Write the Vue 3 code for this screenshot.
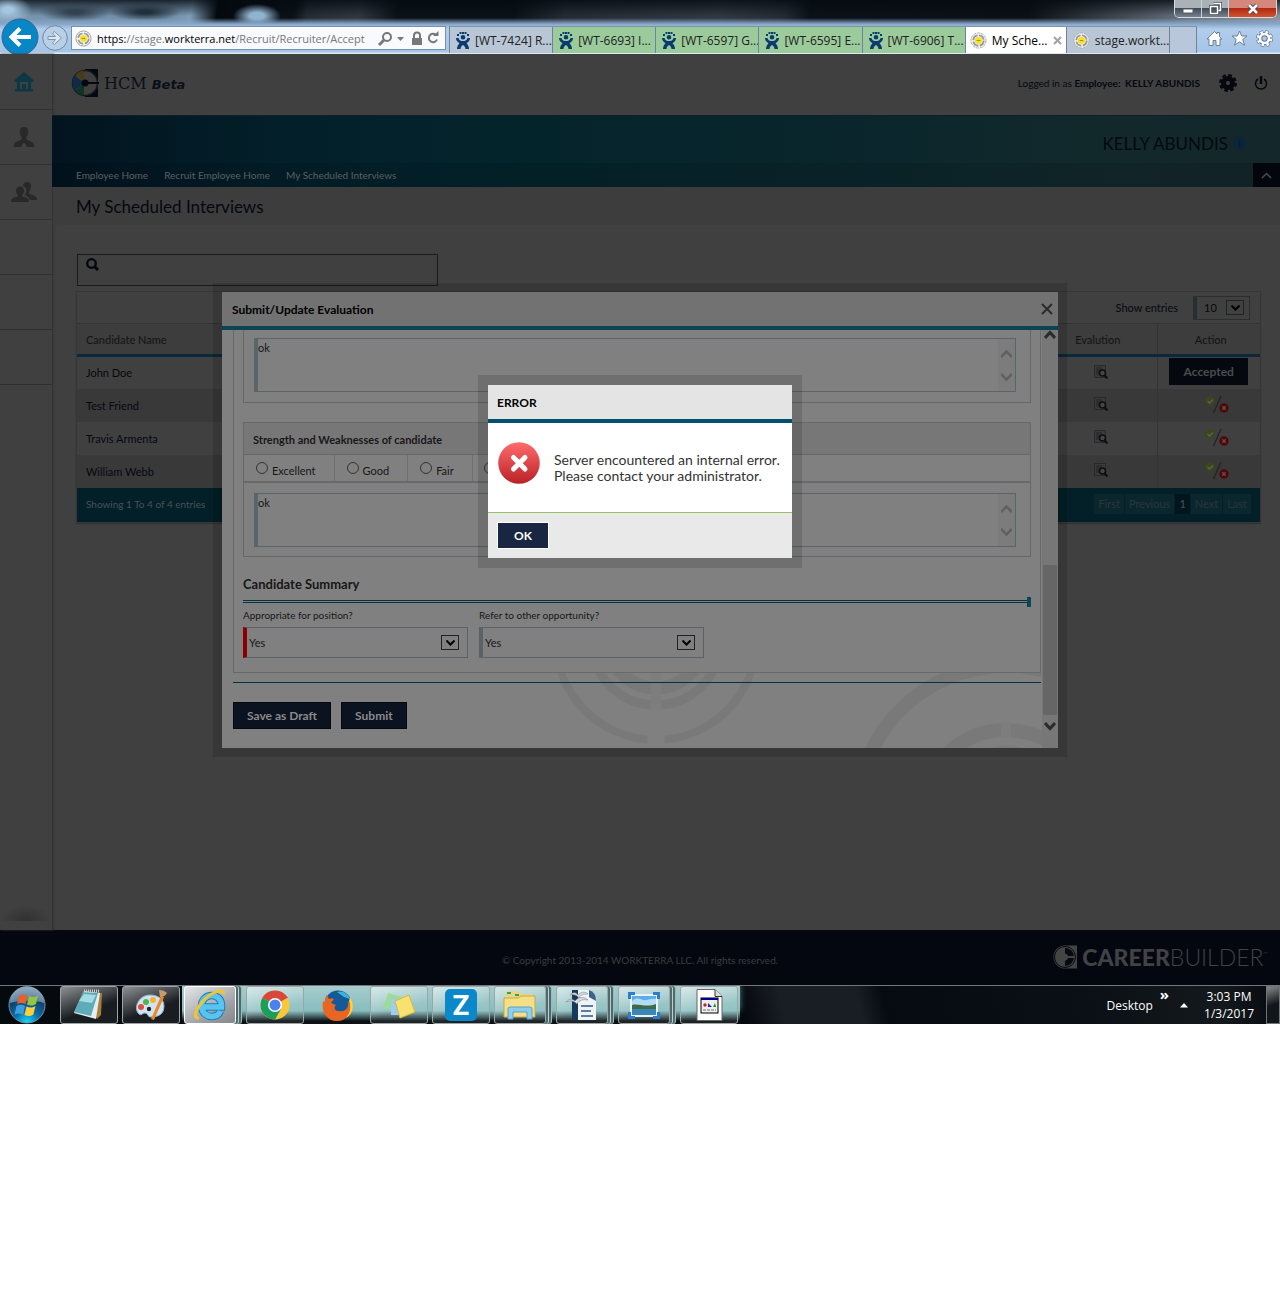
<script setup>
import { ref } from 'vue'

const tabs = [
  { title: '[WT-7424] R...', icon: 'person', kind: 'plain' },
  { title: '[WT-6693] I...', icon: 'person', kind: 'green' },
  { title: '[WT-6597] G...', icon: 'person', kind: 'green' },
  { title: '[WT-6595] E...', icon: 'person', kind: 'green' },
  { title: '[WT-6906] T...', icon: 'person', kind: 'green' },
  { title: 'My Sche...', icon: 'target', kind: 'active' },
  { title: 'stage.workt...', icon: 'target', kind: 'plain' }
]
const crumbs = ['Employee Home', 'Recruit Employee Home', 'My Scheduled Interviews']
const candidates = [
  { name: 'John Doe', accepted: true },
  { name: 'Test Friend', accepted: false },
  { name: 'Travis Armenta', accepted: false },
  { name: 'William Webb', accepted: false }
]
const pages = ['First', 'Previous', '1', 'Next', 'Last']
const ratings = ['Excellent', 'Good', 'Fair']
const apps = [
  { id: 'notepad' },
  { id: 'paint' },
  { id: 'ie', stack: true, current: true },
  { id: 'chrome', teal: true },
  { id: 'firefox', teal: true, bare: true },
  { id: 'notes', teal: true },
  { id: 'z', teal: true },
  { id: 'explorer', teal: true, stack: true },
  { id: 'writer', teal: true, stack: true },
  { id: 'viewer', teal: true, stack: true },
  { id: 'file', teal: true }
]
const search = ref('')
const firstNote = ref('ok')
const secondNote = ref('ok')
const rating = ref('')
</script>

<template>
  <div class="screen">
    <header class="browser">
      <div class="titlebar">
        <div class="window-buttons">
          <button class="win" aria-label="Minimize"><svg width="12" height="12" viewBox="0 0 12 12"><rect x="1" y="6" width="10" height="4" fill="#fff" stroke="#555b66" /></svg></button>
          <button class="win" aria-label="Restore"><svg width="13" height="13" viewBox="0 0 13 13"><path d="M4.500 1.500h7v7h-2M1.500 4.500h7v7h-7z" fill="none" stroke="#454b58" stroke-width="3" /><path d="M4.500 1.500h7v7h-2M1.500 4.500h7v7h-7z" fill="none" stroke="#fff" stroke-width="1.500" /></svg></button>
          <button class="win close" aria-label="Close window"><svg width="12" height="12" viewBox="0 0 12 12"><path d="M2 2l8 8M10 2l-8 8" stroke="#4b4352" stroke-width="4.500" /><path d="M2 2l8 8M10 2l-8 8" stroke="#fff" stroke-width="2.500" /></svg></button>
        </div>
      </div>
      <div class="toolbar">
        <button class="nav-back" aria-label="Back"><svg width="38" height="36" viewBox="0 0 38 36"><circle cx="19" cy="19" r="18" fill="#0986c6" stroke="#35638c" /><path d="M30 19H12M19 10.500L10.500 19l8.500 8.500" fill="none" stroke="#fff" stroke-width="4" /></svg></button>
        <button class="nav-forward" aria-label="Forward"><svg width="26" height="26" viewBox="0 0 26 26"><circle cx="13" cy="13" r="12.300" fill="#b9cfe6" stroke="#6f87a5" /><path d="M6 11.500h7.500L10.500 8l1.800-1.500L19.500 13l-7.200 6.500-1.800-1.500 3-3.500H6z" fill="#dce8f4" stroke="#7d93ae" /></svg></button>
        <div class="address">
          <svg width="17" height="17" viewBox="0 0 18 18"><circle cx="9" cy="9" r="8" fill="#fff" stroke="#999" /><circle cx="9" cy="9" r="5.500" fill="none" stroke="#9a9a9a" stroke-width="2" stroke-dasharray="7 1.600" /><circle cx="9" cy="9" r="3.800" fill="#f3e12b" /><path d="M7 9h4" stroke="#a58d10" /></svg>
          <span class="url">https:<i>//stage.</i>workterra.net<i>/Recruit/Recruiter/Accept</i></span>
          <svg width="63" height="17" viewBox="0 0 63 17" fill="none" stroke="#777" stroke-width="2"><circle cx="9" cy="7" r="4" /><path d="M6 10l-5 5" stroke-width="3" /><path d="M19 7h7l-3.500 4z" fill="#777" stroke="none" /><path d="M34 8h10v7H34z" fill="#777" stroke="none" /><path d="M36 8V5.500a3 3 0 0 1 6 0V8" /><path d="M58 5a4.200 4.200 0 1 0 1 4.500" /><path d="M55 6h5.500V1z" fill="#777" stroke="none" /></svg>
        </div>
        <nav class="tabs" aria-label="Browser tabs">
          <a v-for="t in tabs" :key="t.title" href="#" class="tab" :class="t.kind">
            <svg v-if="t.icon === 'person'" width="14" height="17" viewBox="0 0 14 17" fill="#0a3a6e"><path d="M1 2h2v2H1zM3.500 0h2v2h-2zM8.500 0h2v2h-2zM11 2h2v2h-2zM6 0h2v2H6z" /><path d="M7 3a2.300 2.300 0 1 1 0 4.600A2.300 2.300 0 0 1 7 3z" /><path d="M0 6h2.500C3 8.500 5 9 7 9s4-.5 4.500-3H14c0 2.500-1.500 4-3.500 5 1 1.500 2.500 3 2.500 6H9.500C9.500 15 8.500 14 7 13c-1.500 1-2.500 2-2.500 4H1c0-3 1.500-4.500 2.500-6C1.500 10 0 8.500 0 6z" /></svg>
            <svg v-else width="17" height="17" viewBox="0 0 18 18"><circle cx="9" cy="9" r="8" fill="#f3f3f3" stroke="#aaa" stroke-dasharray="3 1" /><circle cx="9" cy="9" r="5.500" fill="none" stroke="#999" stroke-width="2" stroke-dasharray="7 1.600" /><circle cx="9" cy="9" r="3.800" fill="#f6e320" /><path d="M7 9h4" stroke="#a58d10" /></svg>
            <span>{{ t.title }}</span>
            <svg v-if="t.kind === 'active'" class="tab-close" width="9" height="9" viewBox="0 0 9 9"><path d="M1 1l7 7M8 1L1 8" stroke="#a5a5a5" stroke-width="2.200" /></svg>
          </a>
          <button class="new-tab" aria-label="New tab"></button>
        </nav>
        <div class="tools">
          <button aria-label="Home"><svg width="17" height="17" viewBox="0 0 17 17"><path d="M8.500 1.500l2.500 2.500V2.500h2.500v4l2.500 2.500h-2v6.500h-4v-5h-3v5H3V9H1z" fill="#fff" stroke="#6a7f9c" /></svg></button>
          <button aria-label="Favorites"><svg width="17" height="17" viewBox="0 0 17 17"><path d="M8.500 1l2.200 5h5.300l-4.200 3.500 1.700 5.800-5-3.400-5 3.400 1.700-5.800L1 6h5.300z" fill="#fff" stroke="#6a7f9c" /></svg></button>
          <button aria-label="Tools"><svg width="17" height="17" viewBox="0 0 17 17"><circle cx="8.500" cy="8.500" r="6.500" fill="none" stroke="#5f7594" stroke-width="4" stroke-dasharray="3 2.100" /><circle cx="8.500" cy="8.500" r="4.500" fill="none" stroke="#5f7594" stroke-width="4.500" /><circle cx="8.500" cy="8.500" r="6.500" fill="none" stroke="#fff" stroke-width="2.600" stroke-dasharray="2.400 2.700" stroke-dashoffset="-.3" /><circle cx="8.500" cy="8.500" r="4.500" fill="none" stroke="#fff" stroke-width="2.600" /></svg></button>
        </div>
      </div>
    </header>

    <main class="page">
      <div class="workspace">
        <aside class="sidebar">
          <a href="#" aria-label="Home"><svg width="20" height="20" viewBox="0 0 20 20"><path d="M10 0l9.500 8v2H17v7h2v2.500H1V17h2v-7H.5V8zM6 10v7h2v-5h4v5h2v-7z" fill="#0c3744" fill-rule="evenodd" /></svg></a>
          <a href="#" aria-label="Profile"><svg width="20" height="20" viewBox="0 0 20 20" fill="#282828"><path d="M10 0c3 0 4.500 2 4.300 5-.2 2.500-1 4-2 5l.2 2.500 5.500 2.500c1.500.8 2 2 2 5h-7L10.800 16h-1.600L7 20H0c0-3 .5-4.200 2-5l5.500-2.500.2-2.500c-1-1-1.800-2.500-2-5C5.500 2 7 0 10 0z" /></svg></a>
          <a href="#" aria-label="People"><svg width="26" height="20" viewBox="0 0 26 20" fill="#282828"><path d="M16 0c3 0 4 2 4 4.500 0 2-.7 3.700-2 5l.2 2 5.500 2.500c1.600.8 2.300 2 2.300 4h-7c-.5-2.500-2-3.500-5.500-5 1.500-1.500 2.500-4 1.500-6.500-.5-1-1.500-2-3-2.500.3-2.500 1.500-4 4-4z" /><path d="M9 4.500c2.800 0 4 1.700 4 4 0 2-.8 3.500-1.800 4.500v1.500L16 16c1.500.7 2 2 2 4H0c0-2 .5-3.300 2-4l4.800-1.500V13C5.800 12 5 10.500 5 8.500c0-2.300 1.200-4 4-4z" /></svg></a>
          <a href="#" aria-label="Menu item 4"></a>
          <a href="#" aria-label="Menu item 5"></a>
          <a href="#" aria-label="Menu item 6"></a>
          <div class="sidebar-shade"></div>
        </aside>

        <div class="content">
          <header class="app-header">
            <svg width="28" height="28" viewBox="0 0 28 28"><path d="M14 0h13v28H14z" fill="#05080f" /><circle cx="14" cy="14" r="12.500" fill="#404040" stroke="#141a22" stroke-width="1.500" /><path d="M14 14L5 5a12 12 0 0 1 7-3.500z" fill="#4c3a10" /><path d="M13 14L4 6.500a12 12 0 0 0 0 15z" fill="#102c45" /><path d="M13 14l-8.500 8a12 12 0 0 0 8.500 4z" fill="#0b3524" /><path d="M18 7a8.500 8.500 0 0 1 4 6h-8zM18 21a8.500 8.500 0 0 0 4-6h-8z" fill="#404040" /><path d="M14 13h14v2H14z" fill="#05080f" /><circle cx="14" cy="14" r="3.500" fill="#05080f" /></svg>
            <h1 class="brand">HCM <em>Beta</em></h1>
            <p class="login">Logged in as <b>Employee:</b> <strong>KELLY ABUNDIS</strong></p>
            <button aria-label="Settings"><svg width="18" height="18" viewBox="0 0 18 18"><circle cx="9" cy="9" r="4.500" fill="none" stroke="#05080f" stroke-width="5" /><circle cx="9" cy="9" r="7" fill="none" stroke="#05080f" stroke-width="4" stroke-dasharray="3.300 2.200" /></svg></button>
            <button aria-label="Log out"><svg width="14" height="16" viewBox="0 0 14 16" fill="none" stroke="#05080f"><path d="M4 4a5.500 5.500 0 1 0 6 0" stroke-width="1.500" /><path d="M7 1v8" stroke-width="2.500" /></svg></button>
          </header>

          <section class="banner">
            <div class="who">KELLY ABUNDIS <svg width="13" height="13" viewBox="0 0 13 13"><circle cx="6.500" cy="6.500" r="6.500" fill="#0b263b" /><path d="M6.500 3v1.500M6.500 5.500v5" stroke="#0a1e2c" stroke-width="2" /></svg></div>
            <nav class="crumbs">
              <a v-for="c in crumbs" :key="c" href="#">{{ c }}</a>
              <button aria-label="Collapse"><svg width="11" height="7" viewBox="0 0 11 7"><path d="M1 6l4.500-4.500L10 6" fill="none" stroke="#4b4b50" stroke-width="1.500" /></svg></button>
            </nav>
          </section>

          <h2 class="page-title">My Scheduled Interviews</h2>

          <div class="listing">
            <label class="search">
              <svg width="13" height="13" viewBox="0 0 13 13" fill="none" stroke="#04060d"><circle cx="5.500" cy="5.500" r="4.300" stroke-width="2.300" /><path d="M8.500 8.500l3.500 3.500" stroke-width="3" /></svg>
              <input v-model="search" type="text" aria-label="Search" />
            </label>
            <div class="card">
              <div class="card-tools">
                <label for="entries">Show entries</label>
                <div class="picker small">
                  <select id="entries"><option>10</option></select>
                  <span class="drop"><svg width="9" height="6" viewBox="0 0 9 6"><path d="M0.500 .5l4 4 4-4" fill="none" stroke="#000" stroke-width="2" /></svg></span>
                </div>
              </div>
              <table>
                <colgroup><col class="c-name" /><col /><col class="c-eval" /><col class="c-action" /></colgroup>
                <thead>
                  <tr><th>Candidate Name</th><th></th><th class="mid">Evalution</th><th class="mid act">Action</th></tr>
                </thead>
                <tbody>
                  <tr v-for="c in candidates" :key="c.name">
                    <td>{{ c.name }}</td>
                    <td></td>
                    <td class="mid eval"><svg width="14" height="14" viewBox="0 0 14 14"><path d="M.5.500h11v12H.5z" fill="#3a3a3a" stroke="#292929" /><path d="M2 3h6M2 5h6M2 7h4M2 9h4" stroke="#222" /><circle cx="8.500" cy="8" r="3" fill="#454545" stroke="#0c0e14" stroke-width="1.500" /><path d="M10.500 10.500l3 3" stroke="#0c0e14" stroke-width="2" /></svg></td>
                    <td class="mid act" :class="{ done: c.accepted }">
                      <button v-if="c.accepted" class="accepted">Accepted</button>
                      <svg v-else width="24" height="19" viewBox="0 0 24 19"><circle cx="5" cy="6" r="4.700" fill="#3a4819" /><path d="M2.500 6l2 2 3.500-3.500" fill="none" stroke="#5a5f4f" stroke-width="1.500" /><path d="M16 1L8.500 18" stroke="#222" stroke-width="1.200" /><circle cx="19" cy="13" r="4.700" fill="#4d0909" /><path d="M17.300 11.300l3.400 3.400M20.700 11.300l-3.400 3.400" stroke="#6a4a4a" stroke-width="1.300" /></svg>
                    </td>
                  </tr>
                </tbody>
              </table>
              <div class="card-foot">
                <span>Showing 1 To 4 of 4 entries</span>
                <nav class="pager"><a v-for="p in pages" :key="p" href="#" :class="{ on: p === '1' }">{{ p }}</a></nav>
              </div>
            </div>
          </div>
        </div>
      </div>

      <footer class="app-footer">
        <span></span>
        <p>© Copyright 2013-2014 WORKTERRA LLC. All rights reserved.</p>
        <div class="career">
          <svg width="24" height="24" viewBox="0 0 24 24"><path d="M12 .5h12v23H12A11.500 11.500 0 0 1 12 .5z" fill="#444" /><circle cx="12" cy="12" r="10.500" fill="none" stroke="#060911" /><path d="M12 3a9 9 0 0 1 9 8h-6a3 3 0 0 0-3-2.500zM12 21a9 9 0 0 0 9-8h-6a3 3 0 0 1-3 2.500z" fill="#060911" /></svg>
          <span><b>CAREER</b>BUILDER<sup>™</sup></span>
        </div>
      </footer>

      <div class="overlay evaluation-layer">
        <section class="modal evaluation" role="dialog" aria-labelledby="eval-title">
          <header class="modal-head">
            <h2 id="eval-title">Submit/Update Evaluation</h2>
            <button aria-label="Close"><svg width="12" height="12" viewBox="0 0 12 12"><path d="M1 1l10 10M11 1L1 11" stroke="#2c2c2c" stroke-width="2" /></svg></button>
          </header>
          <div class="modal-body">
            <form class="form" @submit.prevent>
              <div class="panel">
                <div class="question first">
                  <div class="note">
                    <textarea v-model="firstNote" aria-label="Comments"></textarea>
                    <span class="note-scroll"><svg width="11" height="8" viewBox="0 0 11 8"><path d="M0 7l5.500-5.500L11 7" fill="none" stroke="#606060" stroke-width="2.500" /></svg><svg width="11" height="8" viewBox="0 0 11 8"><path d="M0 1l5.500 5.500L11 1" fill="none" stroke="#606060" stroke-width="2.500" /></svg></span>
                  </div>
                </div>
                <div class="question">
                  <h3>Strength and Weaknesses of candidate</h3>
                  <div class="ratings">
                    <label v-for="r in ratings" :key="r"><input v-model="rating" type="radio" name="rating" :value="r" /><span>{{ r }}</span></label>
                    <label><input v-model="rating" type="radio" name="rating" value="other" aria-label="Other rating" /></label>
                  </div>
                  <div class="note">
                    <textarea v-model="secondNote" aria-label="Strength and weaknesses comments"></textarea>
                    <span class="note-scroll"><svg width="11" height="8" viewBox="0 0 11 8"><path d="M0 7l5.500-5.500L11 7" fill="none" stroke="#606060" stroke-width="2.500" /></svg><svg width="11" height="8" viewBox="0 0 11 8"><path d="M0 1l5.500 5.500L11 1" fill="none" stroke="#606060" stroke-width="2.500" /></svg></span>
                  </div>
                </div>
                <h3 class="summary">Candidate Summary</h3>
                <div class="rule"></div>
                <div class="fields">
                  <div class="field">
                    <label for="fit">Appropriate for position?</label>
                    <div class="picker required"><select id="fit"><option>Yes</option></select><span class="drop"><svg width="9" height="6" viewBox="0 0 9 6"><path d="M0.500 .5l4 4 4-4" fill="none" stroke="#000" stroke-width="2" /></svg></span></div>
                  </div>
                  <div class="field">
                    <label for="refer">Refer to other opportunity?</label>
                    <div class="picker"><select id="refer"><option>Yes</option></select><span class="drop"><svg width="9" height="6" viewBox="0 0 9 6"><path d="M0.500 .5l4 4 4-4" fill="none" stroke="#000" stroke-width="2" /></svg></span></div>
                  </div>
                </div>
              </div>
              <div class="form-foot">
                <svg class="rings" width="500" height="75" viewBox="0 0 500 75" fill="none" stroke="#797979"><circle cx="114" cy="-33" r="100" stroke-width="8" /><circle cx="114" cy="-33" r="65" stroke-width="9" /><circle cx="114" cy="-33" r="48" stroke-width="13" /><g stroke-width="14"><circle cx="464" cy="142" r="149" /><circle cx="464" cy="142" r="85" /><circle cx="464" cy="142" r="62" /></g><path d="M114 60v13" stroke="#808080" stroke-width="17" /><path d="M464 0v8" stroke="#808080" stroke-width="28" /><path d="M114 0v37M464 49v16" stroke="#7d7d7d" stroke-width="10" /></svg>
                <div class="buttons">
                  <button type="button">Save as Draft</button>
                  <button type="submit">Submit</button>
                </div>
              </div>
            </form>
            <div class="scrollbar">
              <svg width="12" height="9" viewBox="0 0 12 9"><path d="M1 8l5-5.500L11 8" fill="none" stroke="#2b2b2b" stroke-width="3" /></svg>
              <span class="thumb"></span>
              <svg width="12" height="9" viewBox="0 0 12 9"><path d="M1 1l5 5.500L11 1" fill="none" stroke="#2b2b2b" stroke-width="3" /></svg>
            </div>
          </div>
        </section>
      </div>

      <div class="overlay error-layer">
        <section class="modal error" role="alertdialog" aria-labelledby="err-title">
          <header><h2 id="err-title">ERROR</h2></header>
          <div class="error-body">
            <svg width="42" height="42" viewBox="0 0 42 42"><defs><linearGradient id="red" x1="0" y1="0" x2="0" y2="1"><stop offset="0" stop-color="#ff6c6c" /><stop offset="1" stop-color="#b92126" /></linearGradient></defs><circle cx="21" cy="21" r="20.800" fill="url(#red)" /><path d="M15.500 15.500l11.500 11.500M27 15.500L15.500 27" stroke="#fff" stroke-width="5" stroke-linecap="round" /></svg>
            <p>Server encountered an internal error.<br />Please contact your administrator.</p>
          </div>
          <footer><button>OK</button></footer>
        </section>
      </div>
    </main>

    <footer class="taskbar">
      <button class="start" aria-label="Start"><svg width="38" height="38" viewBox="0 0 38 38"><defs><radialGradient id="orb" cx=".5" cy="1" r="1"><stop offset="0" stop-color="#13e0ff" /><stop offset=".35" stop-color="#0b6eaa" /><stop offset=".7" stop-color="#123f6c" /><stop offset="1" stop-color="#7f98ae" /></radialGradient></defs><circle cx="19" cy="19" r="18" fill="url(#orb)" stroke="#7493a8" /><path d="M2 17a17 17 0 0 1 34 0c-8-3-24-3-34 0z" fill="#a6bdcf" opacity=".55" /><path d="M11 10c3-2 5-2 8.500-.5L17.500 18c-3-1.500-5.500-1.500-8.500 0z" fill="#e6602b" /><path d="M21 10c3 1.500 5.500 1.500 9-.5l-2 8.500c-3.500 2-6 2-9 .5z" fill="#93c83e" /><path d="M8.500 20c3-1.700 5.500-1.500 8.500 0l-2 8.500c-3-1.500-5.500-1.500-8.500 0z" fill="#3f9be0" /><path d="M18.500 20.500c3 1.500 5.500 1.500 9-.5l-2.200 8.500c-3.300 2-6 2-8.800.5z" fill="#fbcf38" /></svg></button>
      <div class="apps">
        <div v-for="a in apps" :key="a.id" class="slot" :class="{ teal: a.teal, last: a.id === 'file' }">
          <button class="app" :class="{ stacked: a.stack, current: a.current, bare: a.bare }" :aria-label="a.id">
            <svg v-if="a.id === 'notepad'" width="34" height="32" viewBox="0 0 34 32"><path d="M13 3l17 1-1 22-4 4z" fill="#a57f35" /><path d="M12 2l16 2-4 26-22-6z" fill="#e4eef0" /><path d="M11 3l15 1-7 23L2 23z" fill="#5eabb9" /><path d="M12 5l12 1-4 8-13-2z" fill="#a5dbe2" /><path d="M12 2h15" stroke="#ccc" stroke-width="3" stroke-dasharray="1 1" /></svg>
            <svg v-else-if="a.id === 'paint'" width="34" height="32" viewBox="0 0 34 32"><path d="M16 6c9 0 14 5 14 11 0 8-5 11-14 11-2 0-2-4-5-4s-3 3-6 1C-1 20 4 6 16 6z" fill="#cfe3f0" stroke="#8fb2cc" /><circle cx="7" cy="18" r="3" fill="#e04b3d" /><circle cx="12" cy="13" r="3" fill="#51b253" /><circle cx="19" cy="11" r="3" fill="#f5b233" /><circle cx="15" cy="20" r="2.200" fill="#222" /><path d="M27 7l3 1-10 23-3-1z" fill="#e8892f" /><path d="M25 1c3 0 6 1 8 3-2 3-4 4-7 4z" fill="#c99b6a" /></svg>
            <svg v-else-if="a.id === 'ie'" width="34" height="32" viewBox="0 0 34 32"><g fill="none"><path d="M9 18h19.500C29 10 24 6.500 18.500 6.500S8.500 11 8.500 17s4.500 10.500 10 10.500c4 0 7.500-2 9-5.500" stroke="#1e7cb9" stroke-width="7.500" /><path d="M9 18h19.500C29 10 24 6.500 18.500 6.500S8.500 11 8.500 17s4.500 10.500 10 10.500c4 0 7.500-2 9-5.500" stroke="#57c4f2" stroke-width="5.500" /><path d="M6 29C-1 30 3 19 12 10 20 3 30-1 31 5" stroke="#f4c52d" stroke-width="3" /></g></svg>
            <svg v-else-if="a.id === 'chrome'" width="30" height="30" viewBox="0 0 30 30"><circle cx="15" cy="15" r="14.500" fill="#fbc638" /><path d="M15 15L2.400 7.800A14.500 14.500 0 0 1 27.600 7.800z" fill="#d7483b" /><path d="M2.400 7.800A14.500 14.500 0 0 0 15 29.500L21 19l-6-4z" fill="#1d9d5a" /><path d="M15 8h12.700l-1-2H13z" fill="#d7483b" /><circle cx="15" cy="15" r="7" fill="#fff" /><circle cx="15" cy="15" r="5.500" fill="#4a83ee" /></svg>
            <svg v-else-if="a.id === 'firefox'" width="31" height="31" viewBox="0 0 31 31"><circle cx="16" cy="14" r="13.500" fill="#155a98" /><path d="M15 2c6-2 11 2 13 7l-6-2z" fill="#3fb1dd" /><path d="M29 9c4 11-3 22-14 22C4 31-1 21 1 11l2 2c0-3 0-6 2-8l2 4c3-1 5 0 5 0l-3 4 5 2c-3 3-1 6 3 6 6 1 10-2 9-10 1 1 2 3 2 5 1-2 1-4 1-7z" fill="#ea6522" /><path d="M28 7c5 8 3 17-4 21 5-6 5-12 3-17z" fill="#fcd434" /></svg>
            <svg v-else-if="a.id === 'notes'" width="34" height="28" viewBox="0 0 34 28"><path d="M6 2l16 5-5 14L1 17z" fill="#9cdb98" /><path d="M9 8l17-1 1 17H9z" fill="#9fccf2" /><path d="M13 10l14-6 6 17-15 6z" fill="#f7e170" stroke="#d7b93c" /></svg>
            <svg v-else-if="a.id === 'z'" width="32" height="32" viewBox="0 0 32 32"><rect width="32" height="32" rx="5" fill="#0a88c9" /><text x="16" y="26" text-anchor="middle" font-family="Inter, sans-serif" font-weight="700" font-size="27" fill="#fff">Z</text></svg>
            <svg v-else-if="a.id === 'explorer'" width="34" height="32" viewBox="0 0 34 32"><path d="M2 5l3-3h11l3 3h11v6H2z" fill="#e9d587" /><path d="M4 4h4M12 6h4M21 8h4" stroke="#37a34a" stroke-width="2" /><path d="M1 9h14l3-2h14v21H1z" fill="#f5df84" stroke="#c9a94a" /><path d="M5 30V20q0-2 2-2h20q2 0 2 2v10h-5v-7H10v7z" fill="#8ecdec" stroke="#5ba3cb" /></svg>
            <svg v-else-if="a.id === 'writer'" width="34" height="32" viewBox="0 0 34 32"><path d="M7 1h17l7 9v21H7z" fill="#eef3f6" /><path d="M7 1h6v30H7z" fill="#17375c" /><path d="M24 1q7 2 7 11l-7-4z" fill="#3d6287" /><path d="M16 17h12M16 22h10M16 27h12" stroke="#31567c" stroke-width="1.500" /><path d="M1 13c5-5 8-2 9-1 3-4 9-5 13-1-5-1-9 0-11 4-3-3-6-4-11-2zM5 6c4-4 7-2 8 0 2-3 7-4 10-1-5 0-8 1-9 4-2-3-5-4-9-3z" fill="#d9dee2" stroke="#777" stroke-width=".5" /></svg>
            <svg v-else-if="a.id === 'viewer'" width="32" height="27" viewBox="0 0 32 27"><rect x="2" y="2" width="28" height="23" fill="#e8f2fb" /><rect x="4" y="4" width="24" height="19" fill="#5baeea" /><path d="M4 9c5-4 8-2 11-1s8-2 13-1v10H4z" fill="#b5dcf5" /><path d="M4 13c6-2 14 3 24-1v5H4z" fill="#3d6b4b" /><path d="M4 17h24v6H4z" fill="#3a87b5" /><path d="M1.500 7V1.500H7M25 1.500h5.500V7M30.500 20v5.500H25M7 25.500H1.500V20" fill="none" stroke="#2f7bd0" stroke-width="3" /></svg>
            <svg v-else width="27" height="32" viewBox="0 0 27 32"><path d="M1 .5h18l7 7v24H1z" fill="#fff" stroke="#666" /><path d="M19 .5v7h7" fill="#ddd" stroke="#333" /><rect x="5" y="9" width="17" height="15" fill="#eee" stroke="#000" /><path d="M5 10h17" stroke="#000090" stroke-width="2" /><circle cx="9" cy="16" r="1.700" fill="#c22" /><path d="M12 14l4 4-4 0z" fill="#22c" /><path d="M17 18l2-4 1 4z" fill="#191" /><path d="M7 21h13" stroke="#777" stroke-dasharray="3 1" /></svg>
          </button>
        </div>
      </div>
      <div class="tray">
        <span>Desktop</span>
        <span class="more">»</span>
        <svg width="8" height="5" viewBox="0 0 8 5"><path d="M4 0l4 4.500H0z" fill="#fff" /></svg>
        <time>3:03 PM<br />1/3/2017</time>
        <button class="show-desktop" aria-label="Show desktop"></button>
      </div>
    </footer>
  </div>
</template>

<style>
html,
body {
  margin: 0;
  background: #fff;
}
</style>

<style scoped>
* {
  box-sizing: border-box;
}
h1,
h2,
h3,
p {
  margin: 0;
}
button,
input,
select,
textarea {
  font: inherit;
  color: inherit;
  margin: 0;
  padding: 0;
  border: 0;
  background: none;
  border-radius: 0;
}
a {
  color: inherit;
  text-decoration: none;
}
svg {
  display: block;
  flex: none;
}
.screen {
  font-family: Lato, sans-serif;
  font-size: 11px;
  color: #05080f;
}

/* browser window */
.browser {
  font-family: "Open Sans", sans-serif;
  font-size: 12px;
  color: #222;
  background: linear-gradient(180deg, transparent 18px, #87a6c8 24px, #b1cdec 29px, #a6c4e6 52px, #dfe9f3 53px),
    radial-gradient(ellipse 24px 12px at 257px 16px, #8fb4cf 30%, transparent),
    radial-gradient(ellipse 24px 14px at 8px 10px, #a5c6e0 20%, transparent),
    radial-gradient(ellipse 36px 10px at 75px 12px, #33424f 20%, transparent),
    radial-gradient(ellipse 36px 9px at 145px 12px, #22303b 20%, transparent),
    linear-gradient(180deg, rgba(5, 10, 16, 0.8), transparent 16px),
    linear-gradient(100deg, #7897b0 0, #6f8ca5 13%, #7e9cb5 15%, #05090f 17%, #0a1119 23%, #242c35 24%, #303740 28%, #0a1119 31%, #0a1119 40%, #242b34 44%, #303842 56%, #242b34 61%, #0a1119 63%, #0b1016 80%, #65707c 92%, #8c959f 100%);
}
.titlebar {
  height: 19px;
  display: flex;
  justify-content: flex-end;
  padding-right: 3px;
}
.window-buttons {
  display: flex;
  height: 18px;
  border: 1px solid #d5dbe1;
  border-top: 0;
  border-radius: 0 0 5px 5px;
  overflow: hidden;
}
.win {
  width: 27px;
  display: grid;
  place-items: center;
  border-right: 1px solid #ccd2d8;
  background: linear-gradient(#aab1b9 50%, #414b56 50%, #78838f);
}
.win.close {
  width: 47px;
  border: 0;
  background: linear-gradient(#d4877a 50%, #b02a14 50%, #d1532f);
}
.toolbar {
  display: flex;
  align-items: flex-end;
  height: 35px;
  padding: 0 7px 1px 1px;
}
.nav-back {
  height: 35px;
}
.nav-forward {
  margin: 0 3px 2px;
}
.address {
  flex: 0 1 375px;
  height: 24px;
  margin: 0 3px 3px 0;
  display: flex;
  align-items: center;
  gap: 5px;
  padding: 0 4px 0 3px;
  background: #f8fafd;
  border: 1px solid #7890ae;
}
.url {
  flex: 1;
  min-width: 0;
  overflow: hidden;
  white-space: nowrap;
  font-size: 11px;
  color: #000;
}
.url i {
  font-style: normal;
  color: #777;
}
.tabs {
  flex: 1;
  display: flex;
  height: 27px;
  border-top: 1px solid #7f93ad;
  border-left: 1px solid #6b82a0;
}
.tab {
  flex: 1 1 0;
  min-width: 0;
  display: flex;
  align-items: center;
  gap: 5px;
  padding-left: 6px;
  border-right: 1px solid #6b82a0;
  background: #b8c6d6;
  white-space: nowrap;
  overflow: hidden;
}
.tab.green {
  background: #9bcb9a;
}
.tab.active {
  background: #fff;
  color: #000;
  padding-left: 4px;
}
.tab-close {
  margin-left: auto;
  margin-right: 5px;
}
.new-tab {
  width: 27px;
  background: #b8c8da;
  border-right: 1px solid #6b82a0;
}
.tools {
  display: flex;
  gap: 8px;
  padding: 0 0 6px 9px;
}

/* application page */
.page {
  position: relative;
  background: #404040;
}
.workspace {
  display: flex;
  min-height: 876px;
}
.sidebar {
  width: 53px;
  flex: none;
  display: flex;
  flex-direction: column;
  padding-top: 1px;
  border-right: 1px solid #343434;
  box-shadow: 1px 0 2px #383838;
}
.sidebar a {
  height: 55px;
  display: grid;
  place-items: center;
  padding-right: 4px;
  border-bottom: 1px solid #303030;
}
.sidebar-shade {
  margin-top: auto;
  margin-bottom: 9px;
  height: 16px;
  background: radial-gradient(ellipse at 50% 100%, #303030, #404040 70%);
}
.content {
  flex: 1;
  min-width: 0;
}
.app-header {
  height: 61px;
  display: flex;
  align-items: center;
  padding: 0 12px 3px 18px;
}
.brand {
  margin-left: 5px;
  font-family: "DejaVu Serif", serif;
  font-size: 16px;
  font-weight: 400;
  color: #0b0f18;
}
.brand em {
  font-family: "DejaVu Sans", sans-serif;
  font-weight: 700;
  font-size: 13px;
}
.login {
  margin-left: auto;
  margin-right: 19px;
  font-size: 10px;
}
.login b,
.login strong {
  font-weight: 700;
}
.login strong {
  margin-left: 2px;
}
.app-header button + button {
  margin-left: 17px;
}
.banner {
  margin-left: -1px;
  border-top: 1px solid #102026;
  background: linear-gradient(90deg, #021420, #03202a 20%, #04242c 38%, #0a262c 66%, #12292c 84%, #14272b);
}
.who {
  height: 47px;
  display: flex;
  align-items: center;
  justify-content: flex-end;
  gap: 5px;
  padding: 7px 34px 0 0;
  font-size: 17px;
}
.crumbs {
  height: 24px;
  display: flex;
  align-items: center;
  gap: 16px;
  padding-left: 24px;
  font-size: 10px;
  color: #5a6064;
  background: rgba(0, 0, 0, 0.1);
}
.crumbs button {
  margin-left: auto;
  width: 27px;
  height: 24px;
  display: grid;
  place-items: center;
  background: #04060d;
}
.page-title {
  height: 38px;
  line-height: 40px;
  padding-left: 23px;
  background: #3d3d3d;
  font-size: 17px;
  font-weight: 400;
}
.listing {
  padding: 29px 19px 0 23px;
}
.search {
  display: flex;
  align-items: flex-start;
  gap: 6px;
  width: 361px;
  height: 32px;
  margin: 0 0 5px 1px;
  padding: 3px 8px;
  border: 1px solid #1b1b1b;
}
.search input {
  flex: 1;
  outline: 0;
}
.card {
  border: 1px solid #363636;
  box-shadow: 0 1px 1px #333;
}
.card-tools {
  height: 31px;
  display: flex;
  align-items: center;
  justify-content: flex-end;
  gap: 15px;
  padding-right: 10px;
}
.picker {
  display: grid;
  align-items: center;
  border: 1px solid #596264;
  border-left-width: 4px;
}
.picker.required {
  border-left-color: #8a0000;
}
.picker > * {
  grid-area: 1 / 1;
}
.picker select {
  appearance: none;
  width: 100%;
  height: 100%;
  padding-left: 2px;
}
.picker.small {
  width: 57px;
  height: 24px;
  border-color: #292e31;
}
.picker.small select {
  padding-left: 7px;
}
.drop {
  justify-self: end;
  margin-right: 8px;
  width: 18px;
  height: 15px;
  display: grid;
  place-items: center;
  border: 1px solid #222;
  pointer-events: none;
}
.picker.small .drop {
  margin-right: 5px;
}
table {
  width: 100%;
  table-layout: fixed;
  border-collapse: collapse;
}
.c-name {
  width: 146px;
}
.c-eval {
  width: 122px;
}
.c-action {
  width: 103px;
}
th,
td {
  height: 33px;
  padding: 0 0 0 9px;
  text-align: left;
  font-weight: 400;
}
th {
  height: 32px;
  border-top: 1px solid #333;
  border-bottom: 3px solid #0c293b;
  background: #3d3d3d;
  font-weight: 500;
  color: #151515;
}
tbody tr:nth-child(even) {
  background: #393939;
}
.mid {
  text-align: center;
  padding: 0;
}
.mid svg {
  margin: 0 auto;
}
.mid.eval {
  padding: 0 0 2px 10px;
}
th.mid {
  padding-left: 4px;
}
.act {
  border-left: 1px solid #343434;
}
td.mid.act {
  padding: 0 0 2px 16px;
}
td.mid.act.done {
  padding: 0 0 3px;
}
.accepted {
  width: 79px;
  height: 27px;
  background: #05080f;
  color: #4c4c4c;
  font-size: 12px;
  font-weight: 700;
}
.card-foot {
  height: 34px;
  display: flex;
  align-items: center;
  justify-content: space-between;
  padding: 0 9px 2px;
  background: #031f27;
  color: #45545a;
}
.card-foot > span {
  font-size: 10px;
}
.pager {
  display: flex;
  gap: 1px;
}
.pager a {
  height: 20px;
  line-height: 20px;
  padding: 0 4px;
  background: #0c262e;
  color: #24383e;
}
.pager .on {
  background: #02151c;
  color: #45545a;
}
.app-footer {
  height: 55px;
  display: grid;
  grid-template-columns: 1fr auto 1fr;
  align-items: center;
  padding: 5px 12px 0;
  background: #04070f;
  color: #3b3d41;
}
.app-footer p {
  font-size: 10px;
}
.career {
  display: flex;
  align-items: center;
  justify-content: flex-end;
  gap: 5px;
  height: 44px;
  padding-bottom: 6px;
  font-size: 23px;
  font-weight: 300;
  line-height: 24px;
  color: #414245;
}
.career b {
  font-weight: 900;
}
.career sup {
  font-size: 6px;
  vertical-align: 10px;
  line-height: 1px;
}

/* dialogs */
.overlay {
  position: absolute;
  inset: 0;
  z-index: 1;
  display: flex;
  justify-content: center;
  align-items: flex-start;
}
.evaluation-layer {
  padding-top: 229px;
}
.error-layer {
  z-index: 2;
  padding-top: 321px;
}
.modal {
  border: 10px solid rgba(0, 0, 0, 0.13);
  background-clip: padding-box;
}
.modal h2 {
  font-size: 13px;
  font-weight: 700;
}
.evaluation {
  width: 854px;
  max-width: 90%;
  border-width: 9px;
  background-color: #808080;
}
.modal-head {
  height: 38px;
  display: flex;
  align-items: center;
  justify-content: space-between;
  padding: 0 5px 0 10px;
  background: #727272;
  border-bottom: 4px solid #0b4452;
  color: #000;
}
.modal .modal-head h2 {
  font-size: 12px;
}
.modal-body {
  display: flex;
}
.form {
  flex: 1;
  min-width: 0;
  padding-left: 11px;
  color: #171717;
}
.panel {
  position: relative;
  z-index: 1;
  margin-right: 1px;
  padding: 0 9px 14px;
  background: #808080;
  border: 1px solid #696969;
  border-top: 0;
}
.question {
  border: 1px solid #676767;
  margin-bottom: 19px;
}
.question.first {
  border-top: 0;
  padding-top: 8px;
}
.question h3 {
  height: 32px;
  line-height: 33px;
  padding-left: 9px;
  font-size: 11px;
  font-weight: 700;
  background: #777;
  border-bottom: 1px solid #676767;
}
.ratings {
  display: flex;
  height: 28px;
  border-bottom: 2px solid #696969;
}
.ratings label {
  display: flex;
  align-items: center;
  gap: 4px;
  padding: 0 18px 0 12px;
  border-right: 1px solid #707070;
}
.ratings label:last-child {
  padding-left: 11px;
  border: 0;
}
.ratings span {
  padding-top: 4px;
}
.ratings input {
  appearance: none;
  width: 12px;
  height: 12px;
  border: 1px solid #333;
  border-radius: 50%;
}
.note {
  display: grid;
  margin: 10px 14px 9px 10px;
  height: 54px;
  border: 1px solid #5a6568;
  border-left-width: 4px;
}
.first .note {
  margin-top: 0;
  margin-bottom: 10px;
}
.note > * {
  grid-area: 1 / 1;
}
.note textarea {
  width: 100%;
  height: 52px;
  resize: none;
  overflow: hidden;
  line-height: 17px;
}
.note-scroll {
  justify-self: end;
  width: 17px;
  display: flex;
  flex-direction: column;
  align-items: center;
  justify-content: space-between;
  padding: 11px 0 10px;
  background: #7c7c7c;
}
.summary {
  font-size: 13px;
  line-height: 16px;
}
.rule {
  height: 3px;
  margin-top: 8px;
  border: solid #063341;
  border-width: 1px 0;
  position: relative;
}
.rule::after {
  content: "";
  position: absolute;
  right: 0;
  top: -4px;
  width: 4px;
  height: 10px;
  background: #0a4656;
}
.fields {
  display: flex;
  gap: 11px;
  padding-top: 4px;
}
.field {
  width: 225px;
}
.field label {
  display: block;
  font-size: 10px;
  line-height: 16px;
}
.field .picker {
  height: 31px;
  margin-top: 4px;
}
.form-foot {
  position: relative;
  padding: 9px 1px 19px 0;
  overflow: hidden;
}
.rings {
  position: absolute;
  right: 0;
  top: 0;
}
.buttons {
  position: relative;
  display: flex;
  gap: 10px;
  padding-top: 19px;
  border-top: 1px solid #05303d;
}
.buttons button {
  height: 27px;
  padding: 0 13px;
  background: #0b1220;
  border: 1px solid #05080f;
  color: #8a8a8a;
  font-size: 12px;
  font-weight: 700;
}
.scrollbar {
  width: 16px;
  flex: none;
  display: flex;
  flex-direction: column;
  align-items: center;
  padding-bottom: 17px;
  background: #777;
}
.thumb {
  width: 14px;
  height: 150px;
  margin: auto 0 7px;
  background: #666;
}
.error {
  width: 324px;
  background-color: #fff;
  color: #333;
}
.error header {
  height: 38px;
  line-height: 36px;
  padding-left: 9px;
  background: #e4e4e4;
  border-bottom: 4px solid #00526b;
  color: #000;
}
.modal.error h2 {
  font-size: 12px;
}
.error-body {
  height: 89px;
  display: flex;
  gap: 14px;
  padding: 19px 10px;
  font-size: 14px;
  line-height: 16px;
}
.error-body p {
  padding-top: 10px;
  white-space: nowrap;
}
.error footer {
  height: 46px;
  padding: 9px;
  background: #e9e9e9;
  border-top: 1px solid #95c25e;
}
.error footer button {
  width: 52px;
  height: 27px;
  background: #182641;
  border: 1px solid #fff;
  color: #fff;
  font-size: 12px;
  font-weight: 700;
}

/* desktop taskbar */
.taskbar {
  height: 39px;
  display: flex;
  background: linear-gradient(75deg, #050a0e 0, #060a10 58%, #191d24 61%, #191d24 67%, #060b11 69%, #0b1016 85%, #14191d 95%, #05090d 100%);
  border-top: 1px solid #74767c;
  color: #fff;
  font-family: "Open Sans", sans-serif;
  font-size: 12px;
}
.start {
  width: 54px;
  height: 38px;
  display: grid;
  place-items: center;
  margin-right: 4px;
}
.apps {
  display: flex;
}
.slot {
  padding: 0 2px;
}
.slot.teal,
.slot:nth-child(3) {
  background: linear-gradient(#a7cccd 0, #87bdbe 65%, #0b1114 92%);
}
.slot.last {
  box-shadow: 6px -8px 6px -6px #5c8688;
}
.app {
  width: 58px;
  height: 38px;
  display: grid;
  place-items: center;
  border: 1px solid #9da5a8;
  border-radius: 3px;
  background: linear-gradient(160deg, rgba(255, 255, 255, 0.55), rgba(255, 255, 255, 0.08) 60%);
}
.app.bare {
  border-color: transparent;
  background: none;
}
.app.stacked {
  width: 52px;
  margin-right: 6px;
  box-shadow: 2px 0 0 #50696b, 3px 0 0 #b9cfd0, 5px 0 0 #50696b, 6px 0 0 #9fb8ba;
}
.app.current {
  background: linear-gradient(150deg, #e6e6e9, #9b9da1 70%, #85888c);
  border-color: #fff;
}
.tray {
  margin-left: auto;
  display: flex;
  align-items: center;
}
.more {
  align-self: flex-start;
  margin: 0 11px 0 7px;
  font-size: 15px;
  line-height: 16px;
  font-weight: 700;
}
.tray time {
  margin: 0 12px 0 16px;
  text-align: center;
  line-height: 17px;
}
.show-desktop {
  width: 14px;
  height: 38px;
  border: 1px solid #6e7478;
  background: linear-gradient(160deg, #888, #11161a 50%);
}
</style>
